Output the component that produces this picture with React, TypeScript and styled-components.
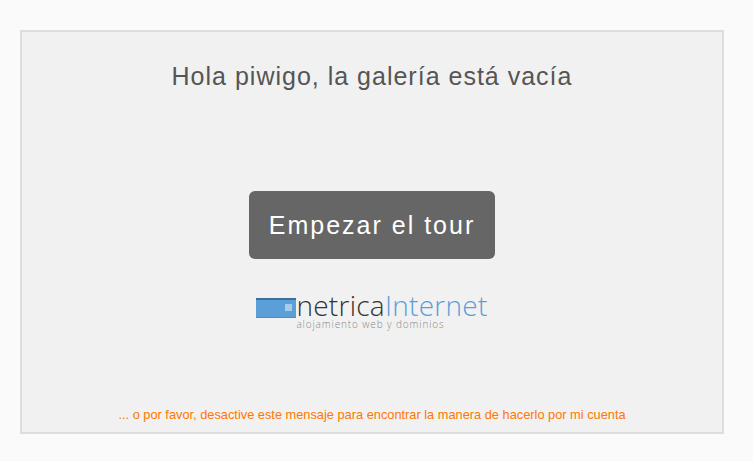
import styled, { createGlobalStyle } from "styled-components";

const GlobalStyle = createGlobalStyle`
  html, body {
    margin: 0;
    padding: 0;
    background: #fafafa;
    font-family: "Liberation Sans", Arial, sans-serif;
  }
`;

const Page = styled.div`
  width: 753px;
  height: 461px;
  padding: 30px 29px 27px 20px;
  box-sizing: border-box;
  overflow: hidden;
`;

const Card = styled.div`
  box-sizing: border-box;
  height: 404px;
  border: 2px solid #dddddd;
  background: #f1f1f1;
  display: flex;
  flex-direction: column;
  align-items: center;
`;

const Title = styled.h1`
  margin: 28px 0 0;
  font-size: 25px;
  line-height: 32px;
  font-weight: 400;
  letter-spacing: 1px;
  color: #555555;
`;

const TourButton = styled.a`
  margin-top: 99px;
  box-sizing: border-box;
  width: 246px;
  height: 68px;
  display: flex;
  align-items: center;
  justify-content: center;
  border-radius: 6px;
  background: #666666;
  color: #ffffff;
  font-size: 25px;
  letter-spacing: 2px;
  cursor: pointer;
`;

const Logo = styled.div`
  margin-top: 33px;
  display: flex;
  align-items: flex-start;
`;

const LogoMark = styled.svg`
  display: block;
  width: 40px;
  height: 20px;
  margin-top: 6px;
`;

const LogoText = styled.div`
  display: flex;
  flex-direction: column;
`;

const Brand = styled.div`
  font-family: "Open Sans", sans-serif;
  font-weight: 300;
  font-size: 28px;
  line-height: 27px;
  letter-spacing: 0.27px;
  color: #333333;
`;

const BrandAccent = styled.span`
  color: #5b9fd8;
`;

const Tagline = styled.div`
  font-family: "Open Sans", sans-serif;
  font-weight: 300;
  font-size: 10px;
  line-height: 10px;
  letter-spacing: 0.88px;
  color: #888888;
`;

const Footer = styled.a`
  margin-top: auto;
  margin-bottom: 10px;
  font-size: 12.8px;
  line-height: 15px;
  color: #ff7700;
  cursor: pointer;
`;

export default function App() {
  return (
    <>
      <GlobalStyle />
      <Page>
        <Card>
          <Title>Hola piwigo, la galería está vacía</Title>
          <TourButton>Empezar el tour</TourButton>
          <Logo>
            <LogoMark viewBox="0 0 40 20">
              <rect width="40" height="20" fill="#5b9fd8" />
              <rect width="40" height="2" fill="#3c6f9c" />
              <rect y="19" width="40" height="1" fill="#4a8bc4" />
              <rect x="29" y="6" width="7" height="7" fill="#a8cbe8" />
            </LogoMark>
            <LogoText>
              <Brand>
                netrica<BrandAccent>Internet</BrandAccent>
              </Brand>
              <Tagline>alojamiento web y dominios</Tagline>
            </LogoText>
          </Logo>
          <Footer>... o por favor, desactive este mensaje para encontrar la manera de hacerlo por mi cuenta</Footer>
        </Card>
      </Page>
    </>
  );
}
